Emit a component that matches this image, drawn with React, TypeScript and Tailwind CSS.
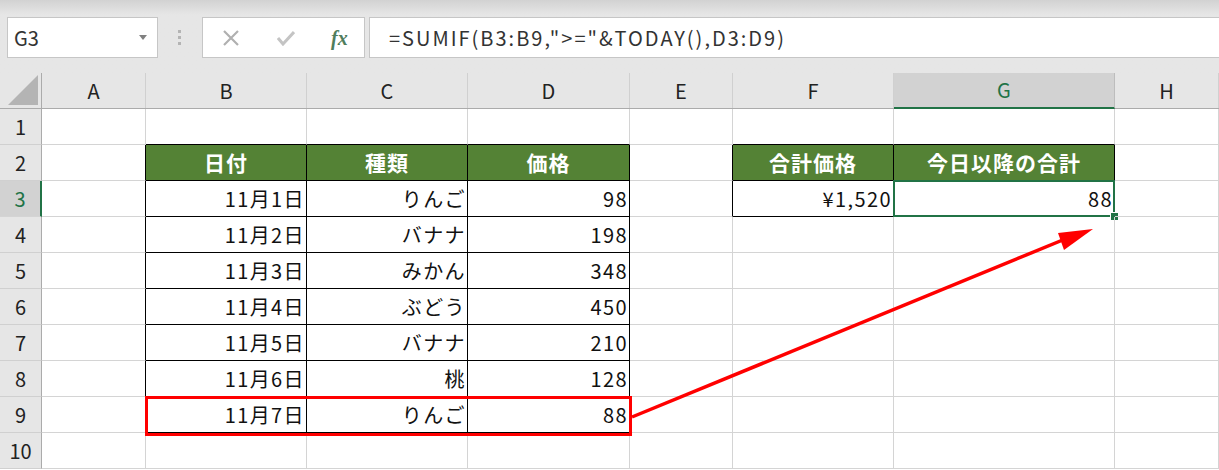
import React from "react";

const COLS = ["A", "B", "C", "D", "E", "F", "G", "H"];

const DATA: Record<number, Record<string, string>> = {
  2: { B: "日付", C: "種類", D: "価格", F: "合計価格", G: "今日以降の合計" },
  3: { B: "11月1日", C: "りんご", D: "98", F: "¥1,520", G: "88" },
  4: { B: "11月2日", C: "バナナ", D: "198" },
  5: { B: "11月3日", C: "みかん", D: "348" },
  6: { B: "11月4日", C: "ぶどう", D: "450" },
  7: { B: "11月5日", C: "バナナ", D: "210" },
  8: { B: "11月6日", C: "桃", D: "128" },
  9: { B: "11月7日", C: "りんご", D: "88" },
};

const inTable = (r: number, c: number) =>
  (c >= 1 && c <= 3 && r >= 2 && r <= 9) || (c >= 5 && c <= 6 && r >= 2 && r <= 3);

const font = { fontFamily: '"Noto Sans CJK JP", "Noto Sans", sans-serif' };

function Toolbar() {
  return (
    <div className="h-[73px] flex items-start bg-[#e6e6e6] bg-gradient-to-b from-[#d2d2d2] via-[#e6e6e6] via-20% to-[#e6e6e6]">
      <div className="mt-[17px] ml-[7px] w-[151px] h-[41px] bg-white border border-[#c6c6c6] flex items-center pl-[6px] pr-[10px] justify-between">
        <span className="text-[20px] text-[#333]">G3</span>
        <svg width="8" height="5" viewBox="0 0 8 5">
          <path d="M0 0 L8 0 L4 5 Z" fill="#808080" />
        </svg>
      </div>
      <div className="mt-[30px] ml-[20px] flex flex-col gap-[3px]">
        <div className="w-[3px] h-[3px] bg-[#b4b4b4]" />
        <div className="w-[3px] h-[3px] bg-[#b4b4b4]" />
        <div className="w-[3px] h-[3px] bg-[#b4b4b4]" />
      </div>
      <div className="mt-[17px] ml-[21px] w-[163px] h-[41px] bg-white border border-[#c6c6c6] flex items-center">
        <svg className="ml-[20px]" width="16" height="16" viewBox="0 0 16 16">
          <path d="M1 1 L15 15 M15 1 L1 15" stroke="#b0b0b0" strokeWidth="2.2" />
        </svg>
        <svg className="ml-[38px]" width="18" height="16" viewBox="0 0 18 16">
          <path d="M1 8 L6 14 L17 2" stroke="#c4c4c4" strokeWidth="3" fill="none" />
        </svg>
        <span
          className="ml-[36px] text-[20px] italic font-bold text-[#4f7d5c] leading-none"
          style={{ fontFamily: '"Liberation Serif", serif' }}
        >
          fx
        </span>
      </div>
      <div className="mt-[17px] ml-[4px] flex-1 h-[41px] bg-white border border-r-0 border-[#c6c6c6] flex items-center pl-[19px]">
        <span className="text-[20px] text-[#333] tracking-[2px]">=SUMIF(B3:B9,"&gt;="&amp;TODAY(),D3:D9)</span>
      </div>
    </div>
  );
}

function ColumnHeader() {
  return (
    <div className="grid grid-cols-[42px_104px_161px_161px_162px_103px_161px_221px_104px] h-[36px] bg-[#e6e6e6] border-b border-[#ababab]">
      <div className="relative border-r border-[#ababab]">
        <svg className="absolute right-[3px] bottom-[3px]" width="30" height="30" viewBox="0 0 30 30">
          <path d="M30 0 L30 30 L0 30 Z" fill="#b4b4b4" />
        </svg>
      </div>
      {COLS.map((c) =>
        c === "G" ? (
          <div
            key={c}
            className="flex items-center justify-center bg-[#d2d2d2] text-[#217346] text-[20px] border-r border-[#bdbdbd] border-b-2 border-b-[#217346] -mb-px"
          >
            {c}
          </div>
        ) : (
          <div key={c} className="flex items-center justify-center text-[20px] text-[#222] border-r border-[#d0d0d0]">
            {c}
          </div>
        )
      )}
    </div>
  );
}

function Row({ r }: { r: number }) {
  const row = DATA[r] || {};
  const selected = r === 3;
  return (
    <div className="grid grid-cols-[42px_104px_161px_161px_162px_103px_161px_221px_104px] h-[36px]">
      {selected ? (
        <div className="flex items-center justify-center bg-[#d2d2d2] text-[#217346] text-[20px] border-b border-[#d4d4d4] border-r-2 border-r-[#217346]">
          {r}
        </div>
      ) : (
        <div className="flex items-center justify-center bg-[#e6e6e6] text-[#222] text-[20px] border-b border-[#d0d0d0] border-r border-r-[#ababab]">
          {r}
        </div>
      )}
      {COLS.map((c, i) => {
        const val = row[c];
        const own = inTable(r, i);
        const blackR = own || inTable(r, i + 1);
        const blackB = own || inTable(r + 1, i);
        const isHead = r === 2 && own;
        const isSel = r === 3 && c === "G";
        return (
          <div
            key={c}
            className={`relative flex items-center border-r border-b ${
              blackR ? "border-r-black" : "border-r-[#d4d4d4]"
            } ${blackB ? "border-b-black" : "border-b-[#d4d4d4]"} ${
              isHead
                ? "bg-[#548235] justify-center text-white font-bold text-[21px] tracking-[1px]"
                : "justify-end pr-[1px] text-[#111] text-[20px] tracking-[1.4px]"
            }`}
          >
            {val}
            {isSel && (
              <div className="absolute -left-px -top-px -right-px -bottom-px border-2 border-[#217346]">
                <div className="absolute right-[-6px] bottom-[-6px] w-[9px] h-[9px] bg-[#217346] border border-white" />
              </div>
            )}
          </div>
        );
      })}
    </div>
  );
}

export default function App() {
  return (
    <div className="relative w-[1219px] h-[470px] overflow-hidden bg-white" style={font}>
      <Toolbar />
      <ColumnHeader />
      {[1, 2, 3, 4, 5, 6, 7, 8, 9, 10].map((r) => (
        <Row key={r} r={r} />
      ))}
      <div className="absolute left-[145px] top-[396px] w-[487px] h-[40px] border-[3px] border-[#ff0000] pointer-events-none" />
      <svg className="absolute left-0 top-0 pointer-events-none" width="1219" height="470" viewBox="0 0 1219 470">
        <line x1="632" y1="417" x2="1070" y2="237" stroke="#ff0000" strokeWidth="3.5" />
        <polygon points="1093,229 1058,233 1064,250" fill="#ff0000" />
      </svg>
    </div>
  );
}
